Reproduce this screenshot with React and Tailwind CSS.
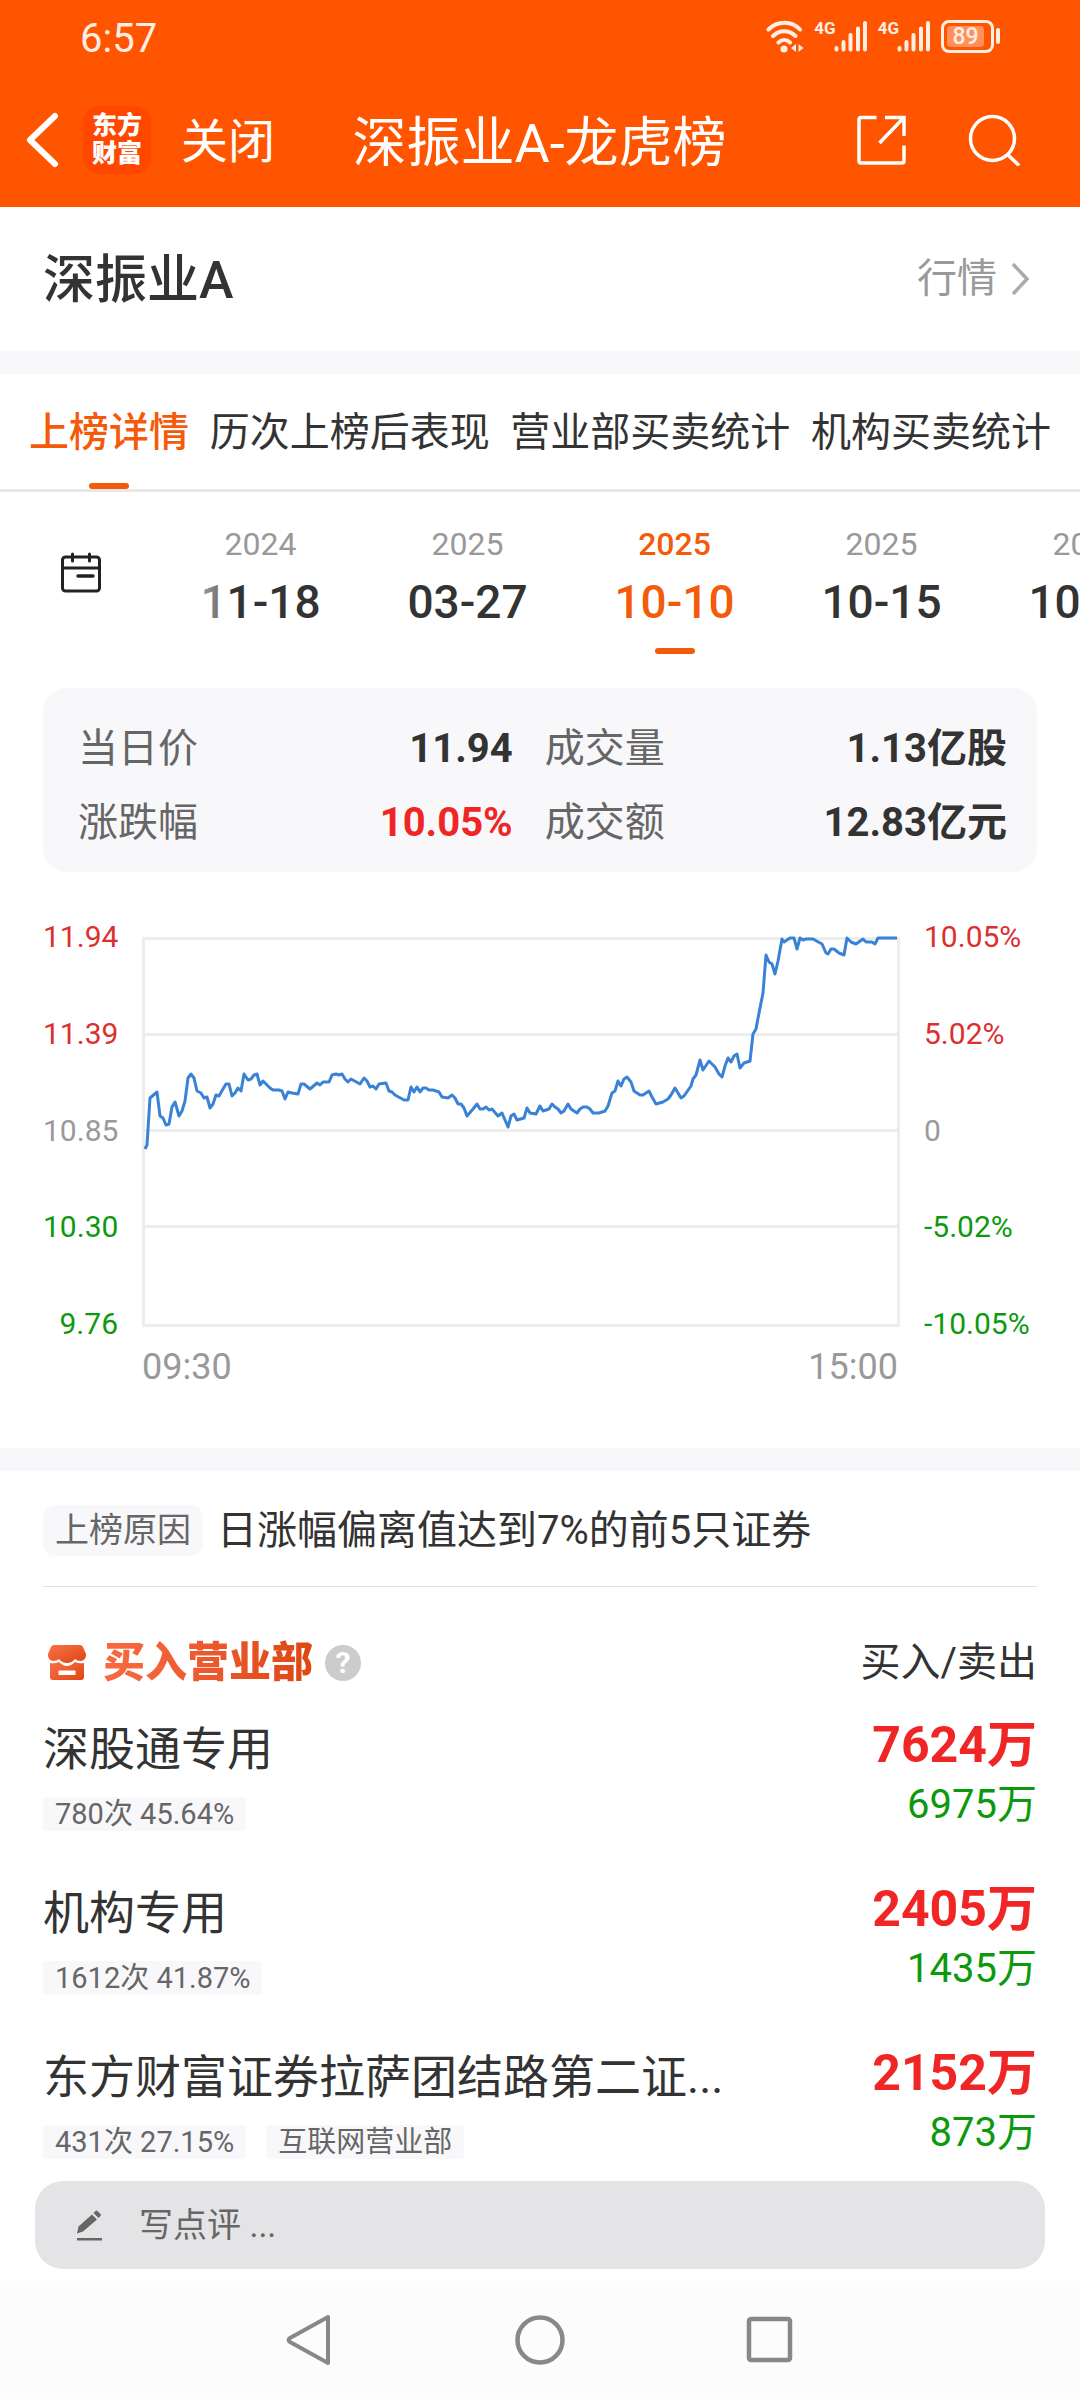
const FONT = "font-[Roboto,'Noto_Sans_CJK_SC',sans-serif]";

const TABS = ["上榜详情", "历次上榜后表现", "营业部买卖统计", "机构买卖统计"];

const DATES = [
  { year: "2024", day: "11-18" },
  { year: "2025", day: "03-27" },
  { year: "2025", day: "10-10", active: true },
  { year: "2025", day: "10-15" },
  { year: "2025", day: "10-16" },
];

const PRICES = [
  { text: "11.94", color: "text-[#dc2f2f]" },
  { text: "11.39", color: "text-[#dc2f2f]" },
  { text: "10.85", color: "text-[#999]" },
  { text: "10.30", color: "text-[#0d990d]" },
  { text: "9.76", color: "text-[#0d990d]" },
];

const PERCENTS = [
  { text: "10.05%", color: "text-[#dc2f2f]" },
  { text: "5.02%", color: "text-[#dc2f2f]" },
  { text: "0", color: "text-[#999]" },
  { text: "-5.02%", color: "text-[#0d990d]" },
  { text: "-10.05%", color: "text-[#0d990d]" },
];

const SEATS = [
  { name: "深股通专用", tags: ["780次 45.64%"], buy: "7624万", sell: "6975万" },
  { name: "机构专用", tags: ["1612次 41.87%"], buy: "2405万", sell: "1435万" },
  {
    name: "东方财富证券拉萨团结路第二证...",
    tags: ["431次 27.15%", "互联网营业部"],
    buy: "2152万",
    sell: "873万",
  },
];

// intraday price line, in the 758x390 space of the plot
const LINE =
  "3,212 5,208 8,161 15,155 18,179 21,181 24,188 27,187 30,170 33,165 37,179 40,174 43,164 46,141 49,137 52,141 " +
  "55,154 59,156 62,161 65,160 68,171 71,167 74,158 77,159 81,152 84,147 87,147 90,159 93,156 96,151 99,154 " +
  "102,137 106,143 109,142 112,138 115,137 118,148 121,144 128,151 131,153 137,153 140,154 143,162 146,155 " +
  "150,156 156,157 159,147 162,147 168,152 175,146 178,148 181,145 187,145 190,138 194,137 197,138 200,137 " +
  "203,142 206,145 209,142 218,147 222,141 225,144 228,150 231,149 234,152 237,147 244,146 247,154 250,155 " +
  "253,158 262,163 266,163 269,150 272,155 275,150 278,155 281,151 284,151 287,153 291,153 294,154 297,155 " +
  "300,160 306,161 310,158 313,161 316,167 319,167 322,171 325,179 331,172 335,167 338,172 341,172 344,170 " +
  "347,173 350,172 356,179 360,176 366,190 369,179 372,177 375,183 382,181 385,171 388,176 394,177 398,169 " +
  "401,174 407,172 410,167 413,170 416,172 419,176 422,174 426,167 429,172 435,176 438,172 441,170 445,170 " +
  "448,172 451,176 457,176 463,174 466,169 470,156 473,154 476,144 479,149 482,142 485,140 489,145 492,154 " +
  "498,158 501,158 507,154 510,160 514,167 521,165 526,162 529,158 533,151 539,161 542,159 549,149 551,142 " +
  "554,138 558,123 561,133 567,124 573,130 577,137 580,140 583,129 586,121 589,125 592,119 595,117 598,131 " +
  "602,126 608,124 611,97 614,92 617,76 621,56 624,18 627,25 630,27 633,37 636,24 640,2 642,5 648,1 652,1 " +
  "655,12 658,1 661,3 664,2 671,2 680,7 684,16 686,17 689,12 692,12 697,16 702,18 705,1 709,5 714,7 721,2 " +
  "724,5 730,5 733,7 736,1 755,1";

function Signal() {
  return (
    <div className="flex items-start">
      <span className="-mr-0.5 text-[17px] leading-4 font-bold">4G</span>
      <svg width="34" height="32" viewBox="0 0 34 32" stroke="currentColor" strokeWidth="4" strokeLinecap="round">
        <path d="M2.5 28v1.500M9.500 22v7.500M16.500 15v14.500M24 8.500v21M31 3v26.500" />
      </svg>
    </div>
  );
}

function StatusBar() {
  return (
    <div className="flex h-[72px] items-center justify-between px-20 text-[#ffeee4]">
      <span className="pt-1.5 text-[40px] leading-10">6:57</span>
      <div className="flex items-center gap-2.5">
        <svg width="38" height="33" viewBox="0 0 38 33" fill="none" stroke="currentColor" strokeWidth="4" strokeLinecap="round">
          <path d="M2.500 9.500c9-9 23-9 31.500 0M7 16c6.500-6.500 16-6.500 22.500 0M12.500 22.500c3.500-3.500 8-3.500 11.500 0" />
          <circle cx="18" cy="29" r="3.500" fill="currentColor" stroke="none" />
          <path d="M30 24v8l-5-4zM32.500 24v8l5-4z" fill="currentColor" stroke="none" />
        </svg>
        <Signal />
        <Signal />
        <div className="flex items-center gap-0.5">
          <div className="flex h-[33px] w-[53px] rounded-lg border-3 border-current p-[3px]">
            <span className="w-[37px] rounded-sm bg-white/35 text-center text-[23px] leading-[21px] font-medium">89</span>
          </div>
          <div className="h-4 w-1 rounded-sm bg-current" />
        </div>
      </div>
    </div>
  );
}

function Header() {
  return (
    <header className="bg-[#ff5500] text-white">
      <StatusBar />
      <div className="flex h-[135px] items-center px-6">
        <button aria-label="返回">
          <svg width="36" height="56" viewBox="0 0 36 56" fill="none" stroke="currentColor" strokeWidth="6" strokeLinecap="round" strokeLinejoin="round">
            <path d="M31 4L6 28l25 24" />
          </svg>
        </button>
        <div className="ml-[23px] flex size-[68px] flex-col items-center justify-center rounded-2xl bg-[#ff4700] text-[25px] leading-7 font-black">
          <span>东方</span>
          <span>财富</span>
        </div>
        <button className="ml-[30px] pt-1 text-[47px] leading-[56px]">关闭</button>
        <h1 className="flex-1 pt-2 pl-3 text-center text-[54px] leading-[64px]">深振业A-龙虎榜</h1>
        <button aria-label="分享" className="mr-[62px] ml-16">
          <svg width="50" height="50" viewBox="0 0 50 50" fill="none" stroke="currentColor" strokeWidth="3.500">
            <path d="M20.500 2.500H5a2 2 0 0 0-2 2V46a2 2 0 0 0 2 2h41a2 2 0 0 0 2-2V30.500M29 2.500h19V21M47 3.500L23.500 28" />
          </svg>
        </button>
        <button aria-label="搜索" className="mr-9">
          <svg width="52" height="52" viewBox="0 0 52 52" fill="none" stroke="currentColor" strokeWidth="3.500">
            <circle cx="24.500" cy="24.500" r="22" />
            <path d="M39.500 40.500L51 51.500" />
          </svg>
        </button>
      </div>
    </header>
  );
}

function StockRow() {
  return (
    <div className="flex h-36 items-center justify-between px-[43px]">
      <h2 className="pt-1 text-[52px] leading-[64px] font-medium">深振业A</h2>
      <a href="#quote" className="flex items-center gap-3 text-[40px] leading-[56px] text-[#999]">
        行情
        <svg width="28" height="32" viewBox="0 0 28 32" fill="none" stroke="#aaa" strokeWidth="3.500">
          <path d="M4 1l14 15L4 31" />
        </svg>
      </a>
    </div>
  );
}

function Tabs() {
  return (
    <nav className="flex h-[118px] justify-between border-b-3 border-[#e8e8e8] px-[29px]">
      {TABS.map((t, i) => (
        <button
          key={t}
          className={`flex flex-col items-center text-[40px] leading-[56px] whitespace-nowrap ${
            i === 0 ? "font-medium text-[#f55a0a]" : ""
          }`}
        >
          <span className="pt-[31px]">{t}</span>
          {i === 0 && <span className="mt-[22px] h-1.5 w-10 rounded-full bg-[#f55a0a]" />}
        </button>
      ))}
    </nav>
  );
}

function DatePicker() {
  return (
    <div className="flex h-[196px] overflow-hidden">
      <button aria-label="选择日期" className="flex w-[157px] shrink-0 items-start pt-[60px] pl-[60px]">
        <svg width="42" height="42" viewBox="0 0 42 42" fill="none" stroke="#222" strokeWidth="3" strokeLinecap="round">
          <rect x="2.500" y="5" width="37" height="34" rx="3" />
          <path d="M2.500 16h37M12.500 2v7M29.500 2v7" />
          <path d="M18 24h15" strokeWidth="3.500" />
        </svg>
      </button>
      <div className="relative flex min-w-0">
        {DATES.map((d) => (
          <button
            key={d.day}
            className={`flex w-[207px] shrink-0 flex-col items-center pt-[34px] ${d.active ? "text-[#f55a0a]" : ""}`}
          >
            <span className={`text-[32px] leading-9 ${d.active ? "font-medium" : "text-[#999]"}`}>{d.year}</span>
            <span className="mt-3 text-[46px] leading-[56px] font-medium">{d.day}</span>
            {d.active && <span className="mt-[18px] h-1.5 w-10 rounded-full bg-current" />}
          </button>
        ))}
        {/* fade at the left edge of the scroller */}
        <div className="pointer-events-none absolute inset-y-0 left-0 w-16 bg-linear-to-r from-white to-white/30" />
      </div>
    </div>
  );
}

function Stat({ label, value, color = "" }) {
  return (
    <div className="flex items-center justify-between">
      <dt className="text-[#666]">{label}</dt>
      <dd className={`font-bold ${color}`}>{value}</dd>
    </div>
  );
}

function Chart() {
  return (
    <section className="px-[43px] pt-[65px] pb-[57px]">
      <div className="grid grid-cols-[75px_1fr_113px] gap-x-6">
        <div className="-mt-[18px] -mb-[15px] flex flex-col justify-between text-right text-[30px] leading-9">
          {PRICES.map((p) => (
            <span key={p.text} className={p.color}>{p.text}</span>
          ))}
        </div>
        <svg className="h-[390px] w-full overflow-visible" viewBox="0 0 758 390" preserveAspectRatio="none" fill="none">
          <path
            d="M0 1.500h758M0 97.500h758M0 193.500h758M0 289.500h758M0 388.500h758M1.500 0v390M756.500 0v390"
            stroke="#ededed"
            strokeWidth="3"
          />
          <polyline points={LINE} stroke="#3a82d6" strokeWidth="3" strokeLinejoin="round" />
        </svg>
        <div className="-mt-[18px] -mb-[15px] flex flex-col justify-between text-[30px] leading-9">
          {PERCENTS.map((p) => (
            <span key={p.text} className={p.color}>{p.text}</span>
          ))}
        </div>
        <div className="col-start-2 mt-4 flex justify-between pr-0.5 text-[36px] leading-[48px] text-[#999]">
          <span>09:30</span>
          <span>15:00</span>
        </div>
      </div>
    </section>
  );
}

function SeatRow({ seat }) {
  return (
    <li className="flex justify-between">
      <div className="pt-1">
        <div className="text-[46px] leading-[60px]">{seat.name}</div>
        <div className="mt-[18px] flex gap-5">
          {seat.tags.map((t) => (
            <span key={t} className="rounded-sm bg-[#f8f8fb] px-3 text-[29px] leading-[34px] text-[#666]">
              {t}
            </span>
          ))}
        </div>
      </div>
      <div className="text-right">
        <div className="text-[50px] leading-[60px] font-bold text-[#f02626]">{seat.buy}</div>
        <div className="mt-1 text-[40px] leading-[52px] text-[#0d990d]">{seat.sell}</div>
      </div>
    </li>
  );
}

function Seats() {
  return (
    <section className="px-[43px]">
      <div className="flex h-[116px] items-center gap-3.5 border-b border-[#e0e0e0] pt-1">
        <span className="rounded-xl bg-[#f8f8fb] px-3 text-[34px] leading-[51px] text-[#666]">上榜原因</span>
        <span className="text-[40px] leading-[56px]">日涨幅偏离值达到7%的前5只证券</span>
      </div>
      <div className="mt-12 flex items-center justify-between">
        <div className="flex items-center">
          <svg className="ml-1" width="40" height="36" viewBox="0 0 40 36">
            <defs>
              <linearGradient id="shop" x1="0" y1="0" x2="1" y2="1">
                <stop offset="0" stopColor="#fb7049" />
                <stop offset="1" stopColor="#dd4710" />
              </linearGradient>
            </defs>
            <path
              fill="url(#shop)"
              d="M7 0h26q2 0 3 2l3 7v1q0 5-5 6-4 0-6-2-3 4-8 4t-8-4q-2 2-6 2-5-1-5-6V9l3-7q1-2 3-2z"
            />
            <path
              fill="url(#shop)"
              fillRule="evenodd"
              d="M3 18q5 1 9-1 4 4 8 4t8-4q4 2 9 1v14q0 3-3 3H6q-3 0-3-3zM11.500 25.500v4.500h17v-4.500z"
            />
          </svg>
          <h3 className="ml-4 bg-linear-to-r from-[#fa6a42] to-[#dd4710] bg-clip-text text-[42px] leading-[56px] font-black text-transparent">
            买入营业部
          </h3>
          <button
            aria-label="说明"
            className="ml-3 size-9 rounded-full bg-[#ccc] text-center text-[30px] leading-9 font-bold text-white"
          >
            ?
          </button>
        </div>
        <span className="text-[40px] leading-[56px]">买入/卖出</span>
      </div>
      <ul className="mt-6 flex flex-col gap-12">
        {SEATS.map((s) => (
          <SeatRow key={s.name} seat={s} />
        ))}
      </ul>
    </section>
  );
}

function CommentBar() {
  return (
    <label className="mx-[35px] mt-[22px] mb-3 flex h-[88px] items-center rounded-[28px] bg-[#e4e4e6] px-[42px] text-[#666]">
      <svg width="26" height="31" viewBox="0 0 26 31" fill="currentColor">
        <path d="M0 23.500l1.500-7L15 4.500l5 5L6 21.500zM16.500 3l2-2q1-1 2 0l3 3q1 1 0 2l-2 2z" />
        <path d="M0 28h25v2.500H0z" />
      </svg>
      <input
        type="text"
        aria-label="写点评"
        placeholder="写点评 ..."
        className="ml-9 min-w-0 flex-1 bg-transparent text-[34px] leading-[48px] outline-none placeholder:text-[#666]"
      />
    </label>
  );
}

function SystemNav() {
  return (
    <nav className="flex h-[118px] items-center justify-center gap-[178px] bg-[#fcfcfc] text-[#888]">
      <button aria-label="后退">
        <svg width="52" height="52" viewBox="0 0 52 52" fill="none" stroke="currentColor" strokeWidth="4" strokeLinejoin="round">
          <path d="M44 3v46L6 28q-3-2 0-4z" />
        </svg>
      </button>
      <button aria-label="主页">
        <svg width="52" height="52" viewBox="0 0 52 52" fill="none" stroke="currentColor" strokeWidth="4.500">
          <circle cx="26" cy="26" r="22.500" />
        </svg>
      </button>
      <button aria-label="最近任务">
        <svg width="52" height="52" viewBox="0 0 52 52" fill="none" stroke="currentColor" strokeWidth="4.500">
          <rect x="5" y="5" width="41" height="41" rx="2" />
        </svg>
      </button>
    </nav>
  );
}

export default function App() {
  return (
    <div lang="zh-CN" className={`min-h-screen overflow-hidden bg-white text-[#333] ${FONT}`}>
      <Header />
      <StockRow />
      <div className="h-[23px] bg-[#f8f8fb]" />
      <Tabs />
      <DatePicker />
      <dl className="mx-[43px] grid grid-cols-[63fr_67fr] gap-x-8 gap-y-[18px] rounded-3xl bg-[#f8f8fb] pt-[33px] pr-[30px] pb-[21px] pl-[35px] text-[40px] leading-[56px]">
        <Stat label="当日价" value="11.94" />
        <Stat label="成交量" value="1.13亿股" />
        <Stat label="涨跌幅" value="10.05%" color="text-[#f02626]" />
        <Stat label="成交额" value="12.83亿元" />
      </dl>
      <Chart />
      <div className="h-[23px] bg-[#f8f8fb]" />
      <Seats />
      <CommentBar />
      <SystemNav />
    </div>
  );
}
